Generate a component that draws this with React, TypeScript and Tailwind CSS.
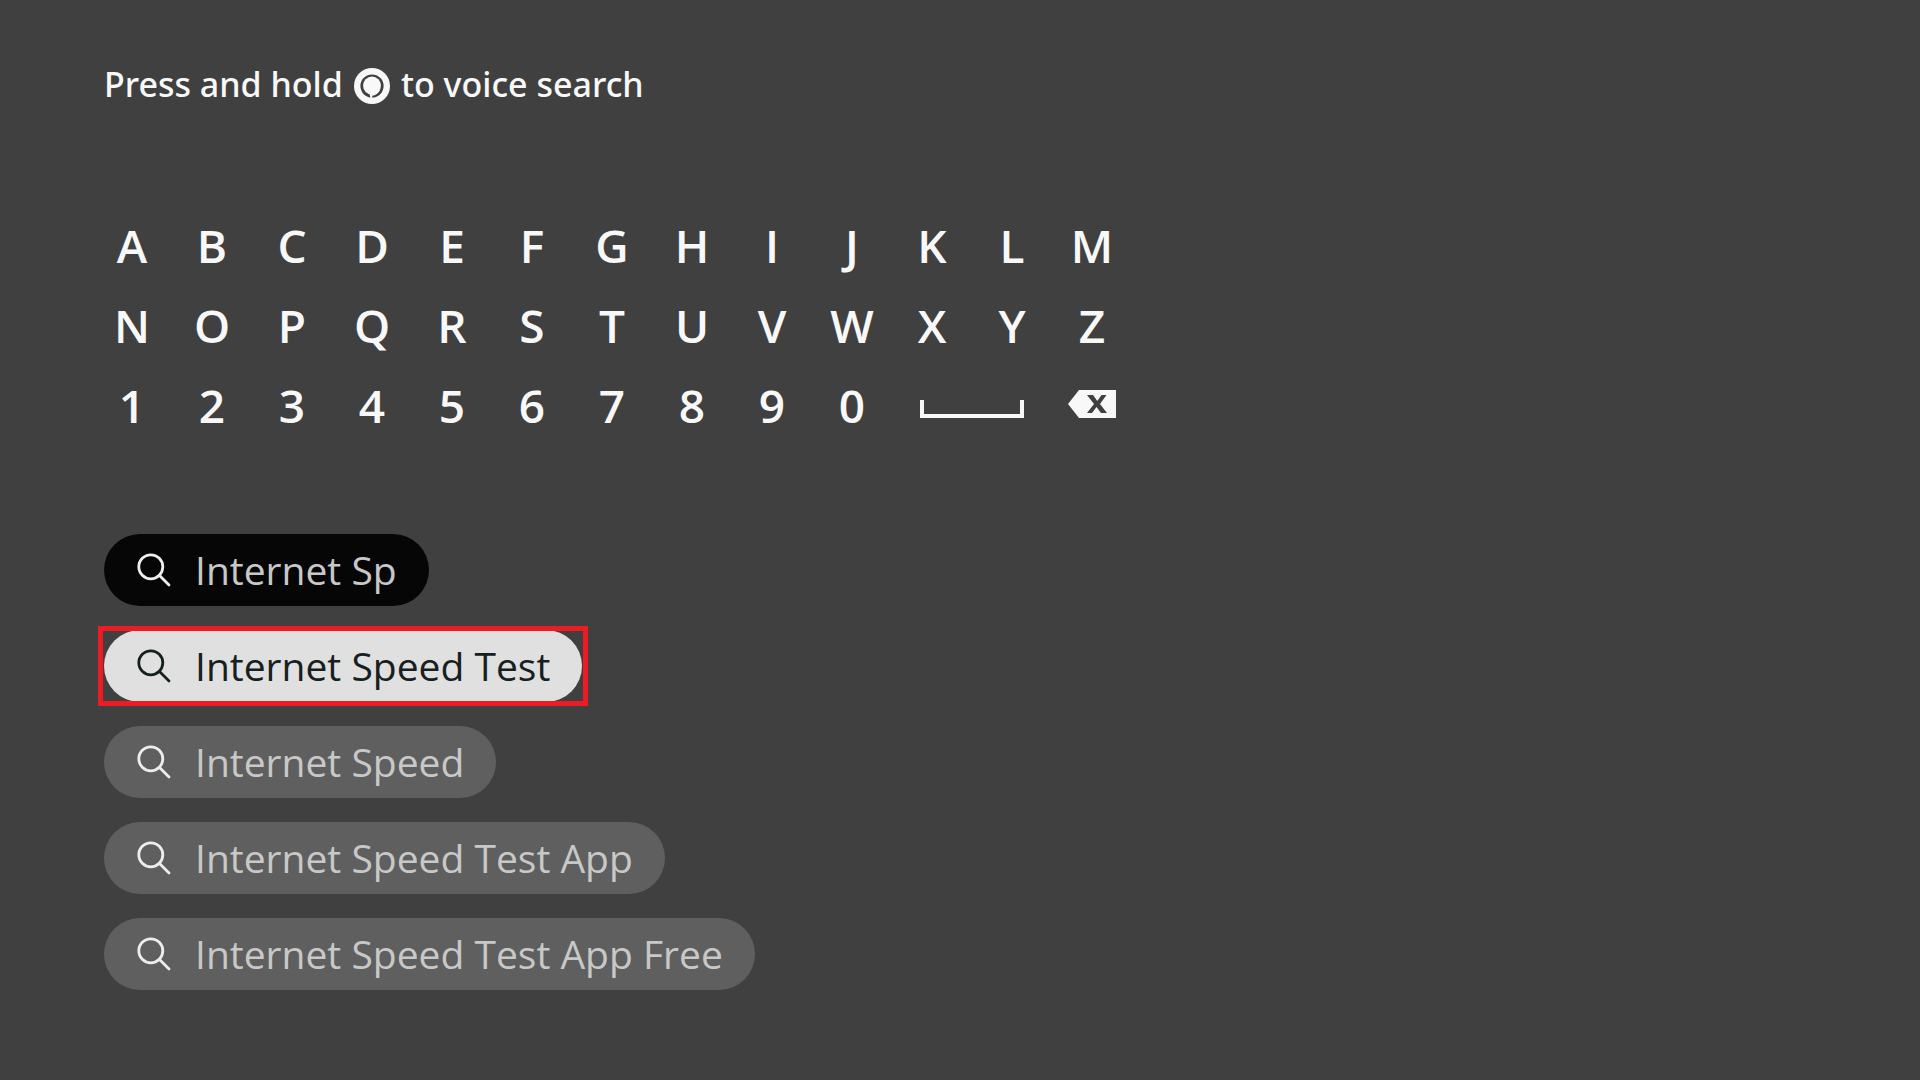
import clsx from 'clsx';

interface Suggestion {
  text: string;
  variant: 'query' | 'focused' | 'default';
}

const keyRows = ['ABCDEFGHIJKLM', 'NOPQRSTUVWXYZ', '1234567890'];

const suggestions: Suggestion[] = [
  { text: 'Internet Sp', variant: 'query' },
  { text: 'Internet Speed Test', variant: 'focused' },
  { text: 'Internet Speed', variant: 'default' },
  { text: 'Internet Speed Test App', variant: 'default' },
  { text: 'Internet Speed Test App Free', variant: 'default' },
];

function AlexaIcon() {
  return (
    <svg viewBox="0 0 36 36" className="w-9 h-9 shrink-0" aria-label="Alexa button">
      <circle cx="18" cy="18" r="18" fill="#f8f8f8" />
      <circle cx="18" cy="18" r="11.6" fill="#404040" />
      <circle cx="18" cy="17.6" r="9" fill="#f8f8f8" />
      <path d="M15.4 25.5L16.6 30.2L18.2 29.4V27.8C21.5 27.3 24.5 25.4 26 22L20 22Z" fill="#f8f8f8" />
    </svg>
  );
}

function SearchIcon() {
  return (
    <svg viewBox="0 0 34 34" className="w-[34px] h-[34px] shrink-0" fill="none" stroke="currentColor" strokeWidth="2.8" strokeLinecap="round">
      <circle cx="13.8" cy="13.8" r="12" />
      <path d="M22.5 22.5L32 32" />
    </svg>
  );
}

function SpaceIcon() {
  return (
    <svg viewBox="0 0 104 18" className="w-[104px] h-[18px]" fill="none" stroke="#f8f8f8" strokeWidth="4">
      <path d="M2 0V16H102V0" />
    </svg>
  );
}

function BackspaceIcon() {
  return (
    <svg viewBox="0 0 48 28" className="w-12 h-7">
      <path d="M0 14L11 0H48V28H11Z" fill="#f8f8f8" />
      <path d="M19 5H25L29.3 11L33.5 5H38.5L32 14L39 23H33L28.5 17L24 23H19L26 14Z" fill="#404040" />
    </svg>
  );
}

function Keyboard() {
  return (
    <div className="-ml-3 mt-[97px] grid w-max grid-cols-[repeat(13,80px)] auto-rows-[80px] text-[46px] leading-[80px] font-semibold">
      {keyRows.map((row) =>
        row.split('').map((key) => (
          <button key={key} type="button" className="text-center">
            {key}
          </button>
        ))
      )}
      <button type="button" aria-label="Space" className="col-span-2 flex items-center justify-center pt-2">
        <SpaceIcon />
      </button>
      <button type="button" aria-label="Backspace" className="flex items-center justify-center pb-0.5">
        <BackspaceIcon />
      </button>
    </div>
  );
}

function SuggestionPill({ text, variant }: Suggestion) {
  return (
    <li className="relative w-max">
      <button
        type="button"
        className={clsx(
          'flex h-[72px] items-center gap-6 rounded-full pl-[33px] pr-8 text-[39px] leading-[72px]',
          variant === 'query' && 'bg-[#060606] text-[#c8c8c8]',
          variant === 'focused' && 'bg-[#e0e0e0] text-[#172020]',
          variant === 'default' && 'bg-[#5f5f5f] text-[#c8c8c8]'
        )}
      >
        <span className={clsx(variant !== 'focused' && 'text-[#eeeeee]')}>
          <SearchIcon />
        </span>
        {text}
      </button>
      {variant === 'focused' && (
        <span className="pointer-events-none absolute -inset-x-1.5 -inset-y-1 border-[5px] border-[#ed1c24]" />
      )}
    </li>
  );
}

export default function App() {
  return (
    <main className="min-h-screen bg-[#404040] px-[104px] pt-[60px] pb-12 font-['Open_Sans','Noto_Sans',sans-serif] text-[#f8f8f8]">
      <h1 className="flex items-center gap-[11px] font-['Noto_Sans',sans-serif] text-[34px] leading-[48px] font-medium">
        Press and hold
        <span className="pt-1">
          <AlexaIcon />
        </span>
        to voice search
      </h1>

      <Keyboard />

      <ul className="mt-[89px] flex flex-col gap-6">
        {suggestions.map((s) => (
          <SuggestionPill key={s.text} {...s} />
        ))}
      </ul>
    </main>
  );
}
